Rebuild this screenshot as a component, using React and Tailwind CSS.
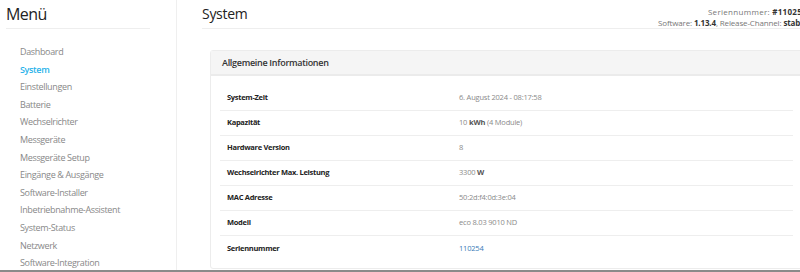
const MENU = [
  'Dashboard',
  'System',
  'Einstellungen',
  'Batterie',
  'Wechselrichter',
  'Messgeräte',
  'Messgeräte Setup',
  'Eingänge & Ausgänge',
  'Software-Installer',
  'Inbetriebnahme-Assistent',
  'System-Status',
  'Netzwerk',
  'Software-Integration',
]

const ROWS = [
  { label: 'System-Zeit', value: <>6. August 2024 - 08:17:58</> },
  { label: 'Kapazität', value: <>10 <b className="font-bold text-[#555]">kWh</b> (4 Module)</> },
  { label: 'Hardware Version', value: <>8</> },
  { label: 'Wechselrichter Max. Leistung', value: <>3300 <b className="font-bold text-[#555]">W</b></> },
  { label: 'MAC Adresse', value: <>50:2d:f4:0d:3e:04</> },
  { label: 'Modell', value: <>eco 8.03 9010 ND</> },
  { label: 'Seriennummer', value: <span className="text-[#3a7bb8]">110254</span> },
]

export default function App() {
  return (
    <div className="w-[800px] h-[272px] overflow-hidden bg-white font-['Open_Sans',sans-serif] text-[#333] flex flex-col">
      <div className="flex flex-1 min-h-0">
        <aside className="w-[177px] shrink-0 border-r border-[#efefef] pl-[6px]">
          <div className="h-[29px] w-[144px] border-b border-[#eeeeee] flex items-center">
            <h2 className="text-[16px] tracking-[-0.6px] leading-none text-[#222]">Menü</h2>
          </div>
          <ul className="pt-[14px] pl-[14px]">
            {MENU.map(item => (
              <li
                key={item}
                className={`h-[17.6px] flex items-center text-[9px] tracking-[-0.35px] ${item === 'System' ? 'text-[#29b3ea] font-semibold' : 'text-[#888]'}`}
              >
                {item}
              </li>
            ))}
          </ul>
        </aside>

        <main className="w-[630px] shrink-0 pl-[25px]">
          <div className="h-[29px] border-b border-[#eeeeee] flex items-center justify-between">
            <h1 className="text-[14px] tracking-[-0.3px] leading-none text-[#222]">System</h1>
            <div className="text-right text-[8px] tracking-[-0.15px] leading-[11px] text-[#777] mt-[5px]">
              <p className="tracking-[0.3px]">Seriennummer: <b className="font-bold text-[#333]">#110254</b></p>
              <p>Software: <b className="font-bold text-[#333]">1.13.4</b>, Release-Channel: <b className="font-bold text-[#333]">stable</b></p>
            </div>
          </div>

          <section className="mt-[21px] ml-[8px] w-[593px] border border-[#ececec] rounded-[3px] pb-[7px]">
            <div className="h-[25px] bg-[#f5f5f5] border-b-2 border-[#ebebeb] flex items-center pl-[11px]">
              <h3 className="text-[9px] font-semibold tracking-[-0.3px] text-[#333]">Allgemeine Informationen</h3>
            </div>
            <div className="pt-[10px] px-[9px]">
              {ROWS.map((r, i) => (
                <div
                  key={r.label}
                  className={`h-[25px] flex items-center ${i < ROWS.length - 1 ? 'border-b border-[#eeeeee]' : ''}`}
                >
                  <span className="w-[239px] pl-[7px] text-[7.5px] font-bold tracking-[-0.3px] text-[#222]">{r.label}</span>
                  <span className="text-[7.5px] tracking-[-0.2px] text-[#8a8a8a]">{r.value}</span>
                </div>
              ))}
            </div>
          </section>
        </main>
      </div>
      <div className="h-[2px] bg-[#8a8a8a] shrink-0" />
    </div>
  )
}
